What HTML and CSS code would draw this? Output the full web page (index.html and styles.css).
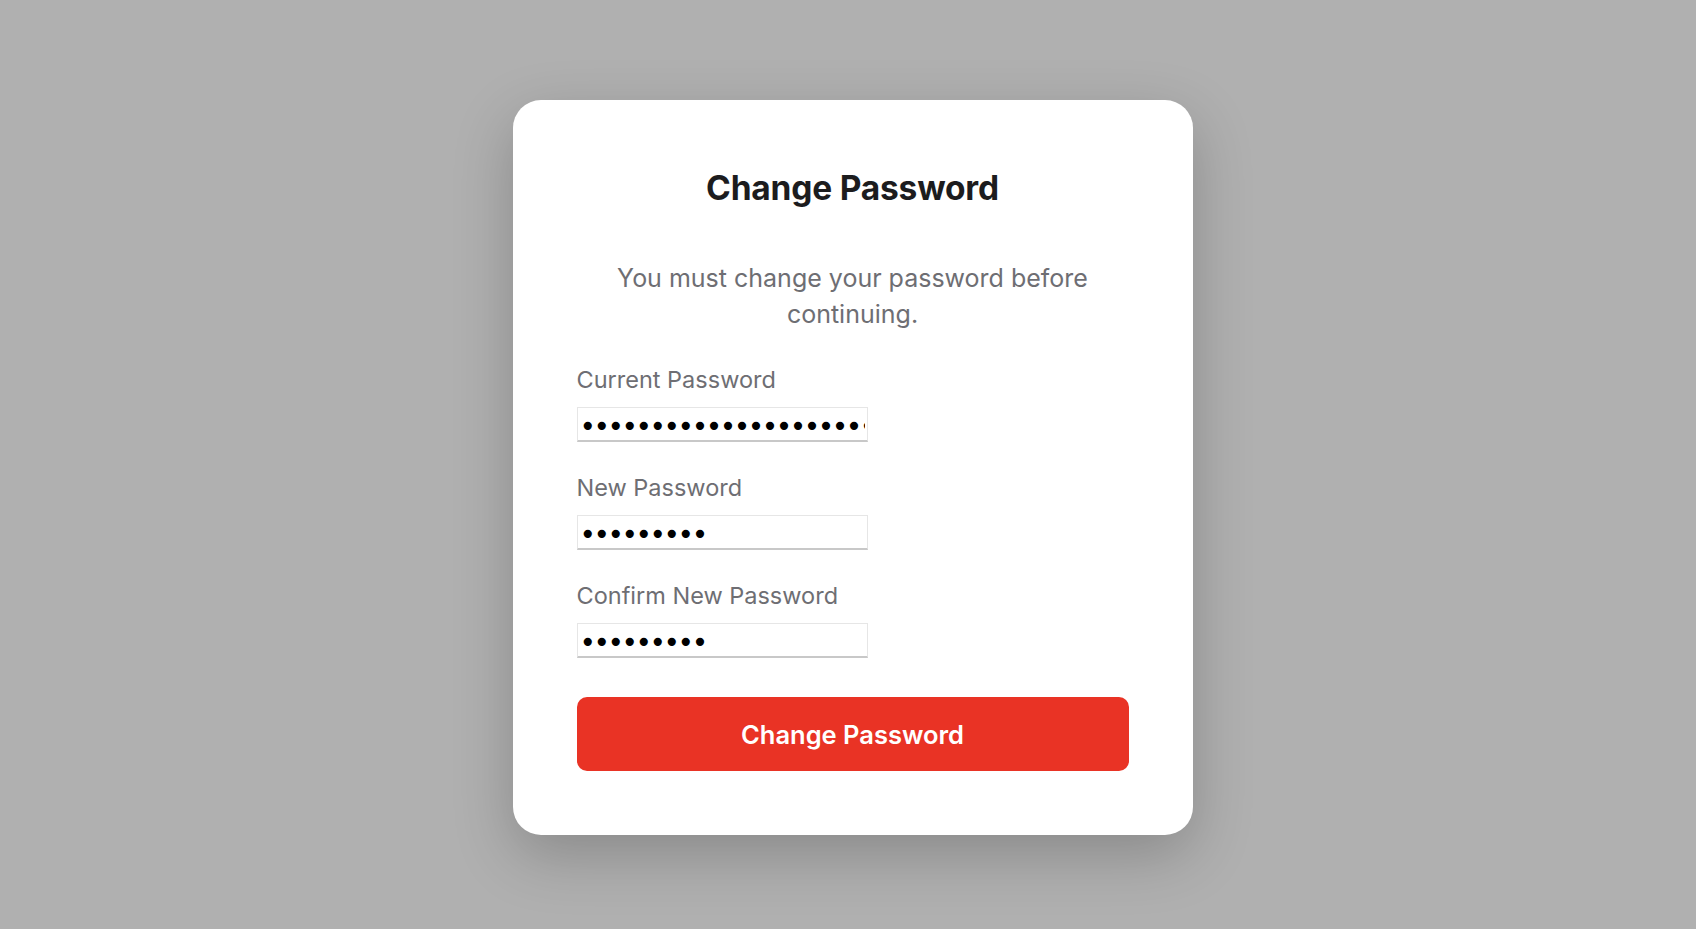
FILE: index.html
```html
<!DOCTYPE html>
<html lang="en">
<head>
    <meta charset="UTF-8">
    <meta name="viewport" content="width=device-width, initial-scale=1.0">
    <title>Change Password</title>
    <link rel="stylesheet" href="styles.css">
</head>
<body>

    <div class="page">
        <form class="card" onsubmit="return false;">
            <h1>Change Password</h1>
            <p class="notice">You must change your password before continuing.</p>

            <div class="field">
                <label for="current_password">Current Password</label>
                <input type="password" id="current_password" value="oldpassword1234567890123">
            </div>

            <div class="field">
                <label for="new_password">New Password</label>
                <input type="password" id="new_password" value="newpass12">
            </div>

            <div class="field">
                <label for="confirm_password">Confirm New Password</label>
                <input type="password" id="confirm_password" value="newpass12">
            </div>

            <button type="submit">Change Password</button>
        </form>
    </div>

</body>
</html>
```

FILE: styles.css
```css
html, body { margin: 0; height: 100%; }
body { font-family: Inter, "Open Sans", sans-serif; background-color: #b0b0b0; }
.page { display: flex; justify-content: center; padding: 100px 0 0 9px; }
.card { background-color: white; border-radius: 28px; padding: 64px; width: 552px; box-shadow: 0 20px 60px rgba(0, 0, 0, 0.22); }
h1 { margin: 0; text-align: center; font-size: 33.5px; line-height: 48px; font-weight: 700; color: #1c1c1e; letter-spacing: -0.2px; }
.notice { margin: 48px 16px 33px; text-align: center; font-size: 25px; line-height: 36px; color: #6e6e73; }
.field { margin-bottom: 31px; }
.field:last-of-type { margin-bottom: 39px; }
label { display: block; font-size: 23.5px; line-height: 30px; color: #6e6e73; margin-bottom: 12px; }
input { display: block; box-sizing: border-box; width: 291px; height: 35px; padding: 5px 2px 0; border: 1px solid #e6e6e6; border-bottom: 2px solid #c8c8c8; font-family: "DejaVu Sans", sans-serif; font-size: 28px; letter-spacing: -2.5px; outline: none; }
button { display: block; width: 100%; height: 74px; border: none; border-radius: 10px; background-color: #e93325; color: white; font-family: Inter, sans-serif; font-size: 25.5px; font-weight: 600; cursor: pointer; }
```
